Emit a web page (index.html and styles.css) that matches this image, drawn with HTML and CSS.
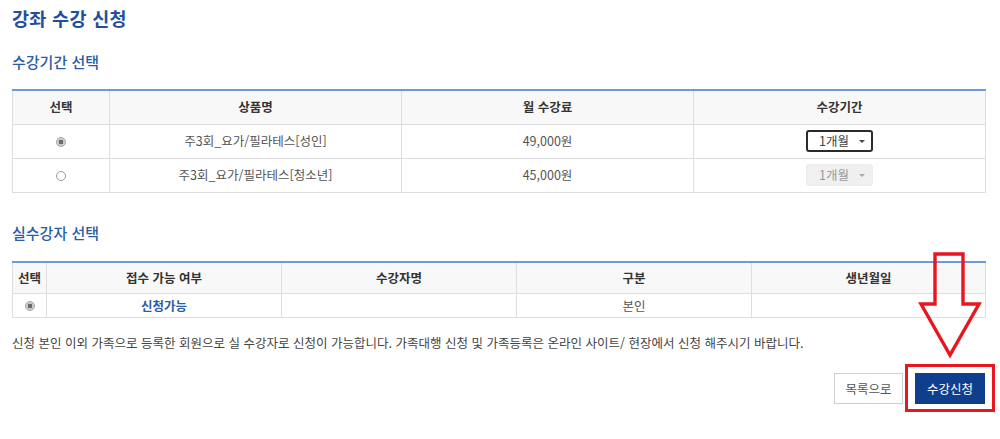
FILE: index.html
```html
<!DOCTYPE html>
<html lang="ko">
<head>
<meta charset="utf-8">
<title>강좌 수강 신청</title>
<link rel="stylesheet" href="styles.css">
</head>
<body>
<div class="page">
  <h1 class="title">강좌 수강 신청</h1>

  <h2 class="sec sec-period">수강기간 선택</h2>
  <table class="grid grid-period">
    <colgroup>
      <col class="c10"><col class="c30"><col class="c30"><col>
    </colgroup>
    <thead>
      <tr><th>선택</th><th>상품명</th><th>월 수강료</th><th>수강기간</th></tr>
    </thead>
    <tbody>
      <tr>
        <td><span class="radio checked"></span></td>
        <td>주3회_요가/필라테스[성인]</td>
        <td>49,000원</td>
        <td><span class="select active">1개월<i class="caret"></i></span></td>
      </tr>
      <tr>
        <td><span class="radio"></span></td>
        <td>주3회_요가/필라테스[청소년]</td>
        <td>45,000원</td>
        <td><span class="select disabled">1개월<i class="caret"></i></span></td>
      </tr>
    </tbody>
  </table>

  <h2 class="sec sec-person">실수강자 선택</h2>
  <table class="grid grid-person">
    <colgroup>
      <col class="cs"><col class="cq"><col class="cq"><col class="cq"><col>
    </colgroup>
    <thead>
      <tr><th>선택</th><th>접수 가능 여부</th><th>수강자명</th><th>구분</th><th>생년월일</th></tr>
    </thead>
    <tbody>
      <tr>
        <td><span class="radio checked"></span></td>
        <td class="ok">신청가능</td>
        <td></td>
        <td>본인</td>
        <td></td>
      </tr>
    </tbody>
  </table>

  <p class="notice">신청 본인 이외 가족으로 등록한 회원으로 실 수강자로 신청이 가능합니다. 가족대행 신청 및 가족등록은 온라인 사이트/ 현장에서 신청 해주시기 바랍니다.</p>

  <div class="actions">
    <button class="btn btn-list" type="button">목록으로</button>
    <button class="btn btn-apply" type="button">수강신청</button>
  </div>

  <div class="mark-box"></div>
  <svg class="mark-arrow" width="70" height="110" viewBox="0 0 70 110" aria-hidden="true">
    <polygon points="20,4 48,4 48,54 64,54 35,105 6,54 20,54" fill="none" stroke="#e8161f" stroke-width="3.4" stroke-linejoin="miter"/>
  </svg>
</div>
</body>
</html>
```

FILE: styles.css
```css
* { box-sizing: border-box; }
html, body { margin: 0; padding: 0; background: #fff; }
body {
  font-family: "Noto Sans CJK KR", "Noto Sans", "Liberation Sans", sans-serif;
  color: #555;
  font-size: 12.5px;
}
.page {
  position: relative;
  width: 1000px;
  height: 439px;
  padding: 7px 14px 0 12px;
}
.title {
  margin: 0;
  font-size: 18.5px;
  line-height: 22px;
  font-weight: 700;
  color: #1f4f9e;
  letter-spacing: 0.3px;
}
.sec {
  margin: 0;
  font-size: 15px;
  line-height: 20px;
  font-weight: 500;
  color: #2a5ca8;
}
.sec-period { margin-top: 23px; }
.sec-person { margin-top: 30px; }

.grid {
  width: 100%;
  border-collapse: collapse;
  table-layout: fixed;
  border-top: 2px solid #6e9bd6;
}
.grid-period { margin-top: 17px; }
.grid-person { margin-top: 18px; }
.c10 { width: 97px; }
.c30 { width: 292px; }
.cs { width: 34px; }
.cq { width: 235px; }

.grid th, .grid td {
  border: 1px solid #dedede;
  text-align: center;
  padding: 0;
  line-height: 18px;
}
.grid th {
  background: #f8f8f8;
  color: #333;
  font-weight: 700;
  font-size: 12.5px;
}
.grid-period th { height: 34px; }
.grid-period td { height: 34px; }
.grid-person th { height: 32px; }
.grid-person td { height: 24px; }
.grid td.ok { color: #2a5ca8; font-weight: 700; }

.radio {
  display: inline-block;
  width: 10px;
  height: 10px;
  border: 1px solid #9a9a9a;
  border-radius: 50%;
  background: #fff;
  vertical-align: middle;
  position: relative;
  top: -1px;
}
.radio.checked {
  background: radial-gradient(circle, #6b6b6b 0 2.2px, #cfcfcf 2.6px 100%);
  border-color: #a8a8a8;
}

.select {
  display: inline-flex;
  align-items: center;
  width: 67px;
  height: 22px;
  padding-left: 11px;
  border-radius: 3px;
  font-size: 12.5px;
  line-height: 18px;
  vertical-align: middle;
  text-align: left;
}
.select.active {
  border: 2px solid #2b2b2b;
  color: #444;
  background: #fff;
}
.select.disabled {
  border: 1px solid #ececec;
  background: #f0f0f0;
  color: #999;
  padding-left: 12px;
}
.caret {
  display: inline-block;
  margin-left: auto;
  margin-right: 6px;
  width: 0;
  height: 0;
  border-left: 3px solid transparent;
  border-right: 3px solid transparent;
  border-top: 3px solid #444;
}
.select.disabled .caret { border-top-color: #aaa; margin-right: 7px; }

.notice {
  margin: 15px 0 0;
  line-height: 20px;
  color: #444;
}

.actions {
  display: flex;
  justify-content: flex-end;
  gap: 12px;
  margin-top: 20px;
  padding-right: 1px;
}
.btn {
  font-family: inherit;
  font-size: 12.5px;
  height: 31px;
  padding: 0;
  cursor: pointer;
  border-radius: 0;
}
.btn-list {
  width: 69px;
  background: #fff;
  color: #555;
  border: 1px solid #cfcfcf;
}
.btn-apply {
  width: 70px;
  background: #0f3f8c;
  color: #fff;
  border: 1px solid #0f3f8c;
}

.mark-box {
  position: absolute;
  left: 905px;
  top: 364px;
  width: 90px;
  height: 48px;
  border: 3px solid #e8161f;
  pointer-events: none;
}
.mark-arrow {
  position: absolute;
  left: 915px;
  top: 250px;
  pointer-events: none;
}
```
